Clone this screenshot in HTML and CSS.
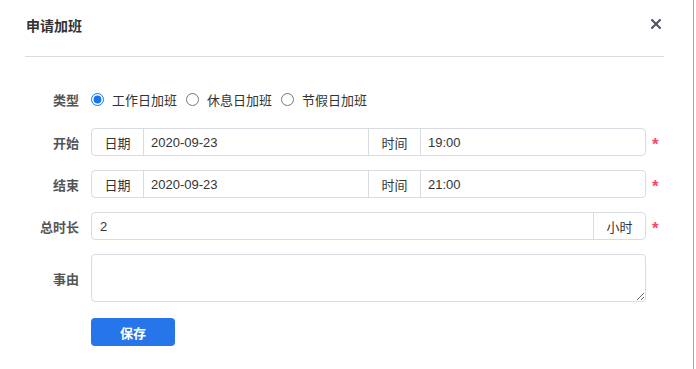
FILE: index.html
```html
<!DOCTYPE html>
<html lang="zh-CN">
  <head>
    <meta charset="UTF-8" />
    <title>申请加班</title>
    <link rel="stylesheet" href="styles.css">
  </head>
  <body>
    <div class="dialog">
      <div class="dialog-header">
        <h3>申请加班</h3>
        <span class="close">
          <svg width="10" height="10" viewBox="0 0 10 10">
            <path d="M1 1 L9 9 M9 1 L1 9" stroke="#4a5260" stroke-width="2" stroke-linecap="square" />
          </svg>
        </span>
      </div>

      <form class="dialog-body" id="overtimeForm">
        <!-- 类型 -->
        <div class="form-row form-row-radio">
          <label class="form-label">类型</label>
          <div class="radio-group">
            <label class="radio"><input type="radio" name="kind" value="work" checked /> 工作日加班</label>
            <label class="radio"><input type="radio" name="kind" value="rest" /> 休息日加班</label>
            <label class="radio"><input type="radio" name="kind" value="holiday" /> 节假日加班</label>
          </div>
        </div>

        <!-- 开始 -->
        <div class="form-row">
          <label class="form-label">开始</label>
          <div class="input-group">
            <span class="addon">日期</span>
            <input class="field" type="text" value="2020-09-23" />
            <span class="addon addon-mid">时间</span>
            <input class="field" type="text" value="19:00" />
          </div>
          <span class="required">*</span>
        </div>

        <!-- 结束 -->
        <div class="form-row">
          <label class="form-label">结束</label>
          <div class="input-group">
            <span class="addon">日期</span>
            <input class="field" type="text" value="2020-09-23" />
            <span class="addon addon-mid">时间</span>
            <input class="field" type="text" value="21:00" />
          </div>
          <span class="required">*</span>
        </div>

        <!-- 总时长 -->
        <div class="form-row">
          <label class="form-label">总时长</label>
          <div class="input-group">
            <input class="field field-hours" type="text" value="2" />
            <span class="addon addon-end">小时</span>
          </div>
          <span class="required">*</span>
        </div>

        <!-- 事由 -->
        <div class="form-row">
          <label class="form-label">事由</label>
          <textarea class="reason"></textarea>
        </div>

        <div class="buttons">
          <button type="submit">保存</button>
        </div>
      </form>
    </div>

    <script>
      document
        .getElementById("overtimeForm")
        .addEventListener("submit", (e) => {
          e.preventDefault();
        });
    </script>
  </body>
</html>
```

FILE: styles.css
```css
body {
  margin: 0;
  font-family: "Liberation Sans", "Noto Sans CJK SC", sans-serif;
  font-size: 13px;
  color: #333;
  background: #fff;
}

.dialog {
  width: 694px;
  height: 369px;
  box-sizing: border-box;
  border-right: 1px solid #a9a9a9;
}

.dialog-header {
  display: flex;
  justify-content: space-between;
  align-items: flex-start;
  height: 56px;
  margin: 0 29px 0 25px;
  border-bottom: 1px solid #d9dce3;
}

.dialog-header h3 {
  margin: 16px 0 0 1px;
  font-size: 14px;
  line-height: 20px;
  font-weight: bold;
  color: #333;
}

.close {
  display: flex;
  margin: 19px 3px 0 0;
  cursor: pointer;
}

.dialog-body {
  display: flex;
  flex-direction: column;
  gap: 14px;
  padding: 28px 0 0 25px;
}

.form-row {
  display: flex;
  align-items: center;
  min-height: 28px;
}

.form-row-radio {
  margin-bottom: 1px;
}

.form-label {
  width: 54px;
  margin-right: 12px;
  text-align: right;
  font-weight: bold;
  color: #555;
}

.radio-group {
  display: flex;
  gap: 9px;
}

.radio {
  display: flex;
  align-items: center;
  gap: 8px;
  color: #333;
}

.radio input[type="radio"] {
  margin: 0;
  width: 13px;
  height: 13px;
  accent-color: #1a73e8;
}

.input-group {
  display: flex;
  width: 555px;
  height: 28px;
  box-sizing: border-box;
  border: 1px solid #d9dce3;
  border-radius: 4px;
}

.addon {
  display: flex;
  align-items: center;
  justify-content: center;
  width: 51px;
  flex-shrink: 0;
  border-right: 1px solid #d9dce3;
  color: #333;
}

.addon-mid {
  border-left: 1px solid #d9dce3;
}

.addon-end {
  border-right: none;
  border-left: 1px solid #d9dce3;
}

.field {
  flex: 1;
  min-width: 0;
  border: none;
  outline: none;
  padding: 0 0 0 7px;
  font-family: inherit;
  font-size: 13px;
  color: #333;
  background: transparent;
}

.field-hours {
  padding-left: 8px;
}

.required {
  width: 8px;
  margin-left: 6px;
  color: #f5476a;
  font-size: 17px;
  font-weight: bold;
  line-height: 1;
  padding-top: 5px;
}

.reason {
  width: 555px;
  height: 48px;
  box-sizing: border-box;
  border: 1px solid #d9dce3;
  border-radius: 4px;
  resize: vertical;
  font-family: inherit;
  outline: none;
}

.buttons {
  margin: 2px 0 0 66px;
}

button {
  width: 84px;
  height: 28px;
  border: none;
  border-radius: 4px;
  background-color: #2775ea;
  color: white;
  font-family: inherit;
  font-size: 13px;
  font-weight: bold;
  cursor: pointer;
}
```
